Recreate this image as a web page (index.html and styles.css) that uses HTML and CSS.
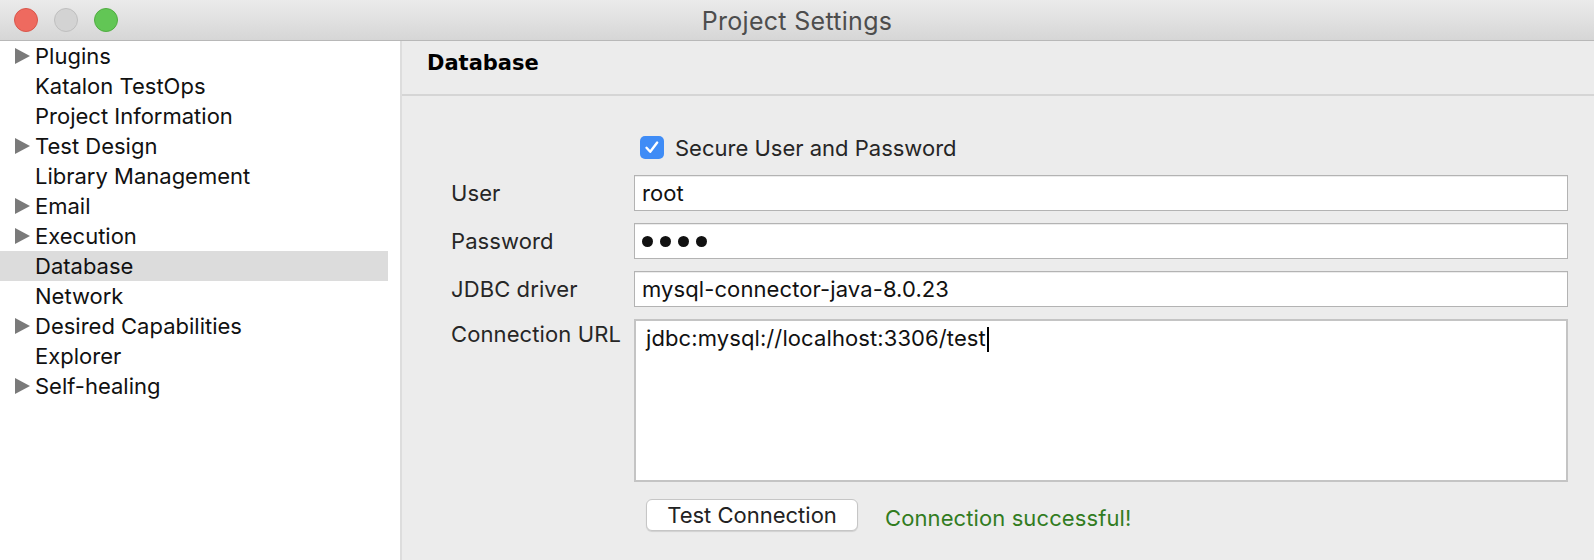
FILE: index.html
```html
<!DOCTYPE html>
<html lang="en">
<head>
<meta charset="utf-8">
<title>Project Settings</title>
<link rel="stylesheet" href="styles.css">
</head>
<body>
<div class="window">
  <header class="titlebar">
    <div class="lights">
      <span class="light red"></span>
      <span class="light gray"></span>
      <span class="light green"></span>
    </div>
    <div class="title">Project Settings</div>
  </header>
  <div class="content">
    <aside class="sidebar">
      <ul class="tree">
        <li class="node parent"><span class="arrow"></span><span class="name">Plugins</span></li>
        <li class="node"><span class="arrow none"></span><span class="name">Katalon TestOps</span></li>
        <li class="node"><span class="arrow none"></span><span class="name">Project Information</span></li>
        <li class="node parent"><span class="arrow"></span><span class="name">Test Design</span></li>
        <li class="node"><span class="arrow none"></span><span class="name">Library Management</span></li>
        <li class="node parent"><span class="arrow"></span><span class="name">Email</span></li>
        <li class="node parent"><span class="arrow"></span><span class="name">Execution</span></li>
        <li class="node selected"><span class="arrow none"></span><span class="name">Database</span></li>
        <li class="node"><span class="arrow none"></span><span class="name">Network</span></li>
        <li class="node parent"><span class="arrow"></span><span class="name">Desired Capabilities</span></li>
        <li class="node"><span class="arrow none"></span><span class="name">Explorer</span></li>
        <li class="node parent"><span class="arrow"></span><span class="name">Self-healing</span></li>
      </ul>
    </aside>
    <main class="panel">
      <div class="panel-header">
        <h1 class="panel-title">Database</h1>
      </div>
      <div class="form">
        <div class="label-cell"></div>
        <label class="check">
          <span class="box">
            <svg viewBox="0 0 24 23" width="24" height="23" aria-hidden="true">
              <path d="M6.5 11.8 L10.2 15.8 L17.2 6.6" fill="none" stroke="#ffffff" stroke-width="2.4" stroke-linecap="round" stroke-linejoin="round"/>
            </svg>
          </span>
          <span class="check-text">Secure User and Password</span>
        </label>

        <div class="label-cell">User</div>
        <div class="field">root</div>

        <div class="label-cell">Password</div>
        <div class="field"><span class="dots"><span class="dot"></span><span class="dot"></span><span class="dot"></span><span class="dot"></span></span></div>

        <div class="label-cell">JDBC driver</div>
        <div class="field">mysql-connector-java-8.0.23</div>

        <div class="label-cell top">Connection URL</div>
        <div class="area">jdbc:mysql://localhost:3306/test<span class="caret"></span></div>

        <div class="label-cell"></div>
        <div class="actions">
          <button class="btn" type="button">Test Connection</button>
          <span class="status">Connection successful!</span>
        </div>
      </div>
    </main>
  </div>
</div>
</body>
</html>
```
FILE: styles.css
```css
* { box-sizing: border-box; }

html, body {
  margin: 0;
  padding: 0;
  height: 100%;
}

body {
  font-family: "Inter", "Liberation Sans", sans-serif;
  font-size: 22px;
  letter-spacing: 0.1px;
  color: #1a1a1a;
  background: #ececec;
  overflow: hidden;
}

.window {
  width: 1594px;
  height: 560px;
  display: flex;
  flex-direction: column;
}

.titlebar {
  height: 41px;
  flex: 0 0 41px;
  display: flex;
  align-items: center;
  justify-content: center;
  position: relative;
  background: linear-gradient(#ebebeb, #d6d6d6);
  border-bottom: 1px solid #b8b8b8;
}

.lights {
  position: absolute;
  left: 14px;
  top: 8px;
  display: flex;
  gap: 16px;
}

.light {
  width: 24px;
  height: 24px;
  border-radius: 50%;
  display: block;
}

.light.red { background: #ee6a5f; border: 1px solid #d9564b; }
.light.gray { background: #d3d3d3; border: 1px solid #bfbfbf; }
.light.green { background: #62c655; border: 1px solid #50ad41; }

.title {
  color: #4d4d4d;
  font-size: 25px;
  letter-spacing: 0.3px;
  padding-top: 1px;
}

.content {
  flex: 1;
  display: flex;
  min-height: 0;
}

.sidebar {
  width: 402px;
  flex: 0 0 402px;
  background: #ffffff;
  border-right: 2px solid #dddddd;
  padding-top: 0;
}

.tree {
  list-style: none;
  margin: 0 12px 0 0;
  padding: 0;
  letter-spacing: 0;
}

.node {
  height: 30px;
  display: flex;
  align-items: center;
  color: #111111;
}

.node.selected {
  background: #dcdcdc;
}

.arrow {
  width: 15px;
  height: 16px;
  margin-left: 15px;
  margin-right: 5px;
  flex: 0 0 15px;
  background: #7a7a7a;
  clip-path: polygon(0 0, 100% 50%, 0 100%);
}

.arrow.none {
  background: transparent;
}

.panel {
  flex: 1;
  display: flex;
  flex-direction: column;
  background: #ececec;
}

.panel-header {
  height: 55px;
  flex: 0 0 55px;
  border-bottom: 2px solid #d5d5d5;
  padding: 8px 0 0 25px;
}

.panel-title {
  margin: 0;
  font-family: "DejaVu Sans", "Liberation Sans", sans-serif;
  font-weight: bold;
  font-size: 21px;
  letter-spacing: 0;
  color: #000000;
  line-height: 28px;
}

.form {
  display: grid;
  grid-template-columns: 183px 1fr;
  grid-auto-rows: auto;
  row-gap: 12px;
  padding: 40px 26px 0 49px;
  color: #262626;
}

.label-cell {
  display: flex;
  align-items: center;
  color: #262626;
}

.label-cell.top {
  align-items: flex-start;
  padding-top: 2px;
}

.check {
  display: flex;
  align-items: center;
  height: 23px;
  margin-left: 6px;
  margin-bottom: 4px;
  color: #262626;
  letter-spacing: 0;
}

.box {
  width: 24px;
  height: 23px;
  border-radius: 5px;
  background: #3f8cf6;
  display: block;
  margin-right: 11px;
}

.box svg { display: block; }

.field {
  height: 36px;
  background: #ffffff;
  border: 1px solid #b3b3b3;
  box-shadow: inset 0 1px 0 #ececec;
  padding: 0 7px;
  display: flex;
  align-items: center;
  color: #111111;
}

.dots {
  display: flex;
  gap: 7px;
}

.dot {
  width: 11px;
  height: 11px;
  border-radius: 50%;
  background: #111111;
  display: block;
}

.area {
  height: 163px;
  background: #ffffff;
  border: 2px solid #c4c4c4;
  padding: 3px 10px;
  line-height: 28px;
  color: #111111;
}

.caret {
  display: inline-block;
  width: 2px;
  height: 25px;
  background: #000000;
  vertical-align: -6px;
  margin-left: 1px;
}

.actions {
  display: flex;
  align-items: center;
  margin-top: 5px;
  padding-left: 12px;
}

.btn {
  font: inherit;
  width: 212px;
  height: 32px;
  background: #ffffff;
  border: 1px solid #c6c6c6;
  border-radius: 6px;
  box-shadow: 0 1px 1px rgba(0, 0, 0, 0.12);
  color: #222222;
  padding: 0;
  margin: 0;
}

.status {
  margin-left: 27px;
  padding-top: 5px;
  color: #327c1f;
}
```
